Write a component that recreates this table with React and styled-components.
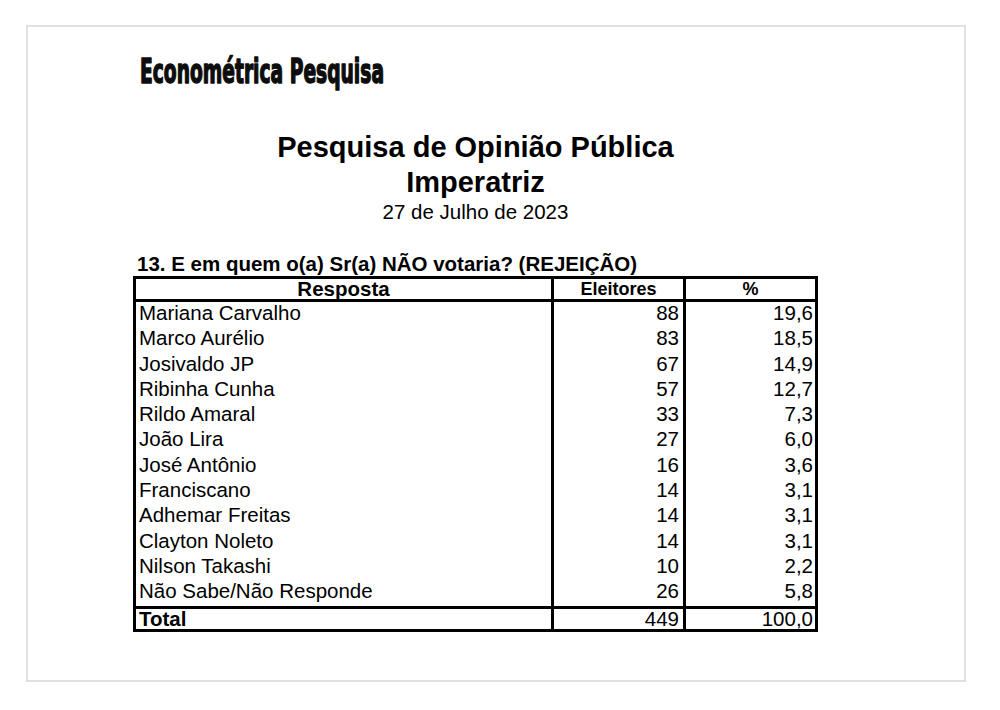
import styled, { createGlobalStyle } from "styled-components";

const rows = [
  { name: "Mariana Carvalho", votes: 88, pct: "19,6" },
  { name: "Marco Aurélio", votes: 83, pct: "18,5" },
  { name: "Josivaldo JP", votes: 67, pct: "14,9" },
  { name: "Ribinha Cunha", votes: 57, pct: "12,7" },
  { name: "Rildo Amaral", votes: 33, pct: "7,3" },
  { name: "João Lira", votes: 27, pct: "6,0" },
  { name: "José Antônio", votes: 16, pct: "3,6" },
  { name: "Franciscano", votes: 14, pct: "3,1" },
  { name: "Adhemar Freitas", votes: 14, pct: "3,1" },
  { name: "Clayton Noleto", votes: 14, pct: "3,1" },
  { name: "Nilson Takashi", votes: 10, pct: "2,2" },
  { name: "Não Sabe/Não Responde", votes: 26, pct: "5,8" },
];

function App() {
  return (
    <>
      <GlobalStyle />
      <Sheet>
        <Logo width="250" height="40" viewBox="0 0 250 40">
          <text
            x="1"
            y="31"
            textLength="244"
            lengthAdjust="spacingAndGlyphs"
            fontFamily="'Liberation Sans Narrow', 'DejaVu Sans Condensed', 'Liberation Sans', sans-serif"
            fontWeight="700"
            fontSize="34"
            fill="#0d0d0d"
            stroke="#0d0d0d"
            strokeWidth="1.5"
            strokeLinejoin="round"
          >
            Econométrica Pesquisa
          </text>
        </Logo>

        <Heading>
          <Title>Pesquisa de Opinião Pública</Title>
          <Title>Imperatriz</Title>
          <DateLine>27 de Julho de 2023</DateLine>
        </Heading>

        <Question>13. E em quem o(a) Sr(a) NÃO votaria? (REJEIÇÃO)</Question>

        <Table>
          <colgroup>
            <col style={{ width: 418 }} />
            <col style={{ width: 132 }} />
            <col style={{ width: 129 }} />
          </colgroup>
          <thead>
            <tr>
              <HeadCell $size={20.5}>Resposta</HeadCell>
              <HeadCell $size={18}>Eleitores</HeadCell>
              <HeadCell $size={18} $last>
                %
              </HeadCell>
            </tr>
          </thead>
          <tbody>
            {rows.map((r) => (
              <tr key={r.name}>
                <NameCell>{r.name}</NameCell>
                <NumCell $pad={4}>{r.votes}</NumCell>
                <NumCell $pad={2} $last>
                  {r.pct}
                </NumCell>
              </tr>
            ))}
          </tbody>
          <tfoot>
            <tr>
              <TotalCell $bold>Total</TotalCell>
              <TotalCell $right $pad={4}>
                449
              </TotalCell>
              <TotalCell $right $pad={2} $last>
                100,0
              </TotalCell>
            </tr>
          </tfoot>
        </Table>
      </Sheet>
    </>
  );
}

export default App;

const GlobalStyle = createGlobalStyle`
  body {
    margin: 0;
    background: #ffffff;
    font-family: "Liberation Sans", Arial, sans-serif;
    color: #000;
  }
`;

const Sheet = styled.main`
  box-sizing: border-box;
  width: 940px;
  height: 657px;
  margin: 25px 0 0 26px;
  padding: 25px 0 0 105px;
  border: 2px solid #e1e1e1;
  background: #fff;
`;

const Logo = styled.svg`
  display: block;
  margin-left: 6px;
  overflow: visible;
`;

const Heading = styled.header`
  width: 685px;
  margin-top: 38px;
  text-align: center;
`;

const Title = styled.h1`
  margin: 0;
  font-size: 29px;
  font-weight: 700;
  line-height: 35px;
`;

const DateLine = styled.p`
  margin: 0;
  font-size: 20.5px;
  line-height: 24px;
`;

const Question = styled.h2`
  margin: 28px 0 0 4px;
  font-size: 20.5px;
  font-weight: 700;
  line-height: 24px;
`;

const Table = styled.table`
  width: 685px;
  table-layout: fixed;
  border-collapse: separate;
  border-spacing: 0;
  border: 3px solid #000;
  font-size: 20.5px;
`;

const HeadCell = styled.th`
  height: 20px;
  padding: 0;
  border-right: ${({ $last }) => ($last ? "none" : "3px solid #000")};
  border-bottom: 3px solid #000;
  font-size: ${({ $size }) => $size}px;
  font-weight: 700;
  line-height: 20px;
  text-align: center;
  vertical-align: top;
`;

const NameCell = styled.td`
  height: 25.3px;
  padding: 0 0 0 3px;
  border-right: 3px solid #000;
  line-height: 22px;
  vertical-align: top;
  white-space: nowrap;
`;

const NumCell = styled.td`
  height: 25.3px;
  padding: 0 ${({ $pad }) => $pad}px 0 0;
  border-right: ${({ $last }) => ($last ? "none" : "3px solid #000")};
  line-height: 22px;
  text-align: right;
  vertical-align: top;
`;

const TotalCell = styled.td`
  height: 19px;
  padding: ${({ $right, $pad }) => ($right ? `0 ${$pad}px 0 0` : "0 0 0 3px")};
  border-top: 3px solid #000;
  border-right: ${({ $last }) => ($last ? "none" : "3px solid #000")};
  font-weight: ${({ $bold }) => ($bold ? 700 : 400)};
  line-height: 20px;
  text-align: ${({ $right }) => ($right ? "right" : "left")};
  vertical-align: top;
`;
